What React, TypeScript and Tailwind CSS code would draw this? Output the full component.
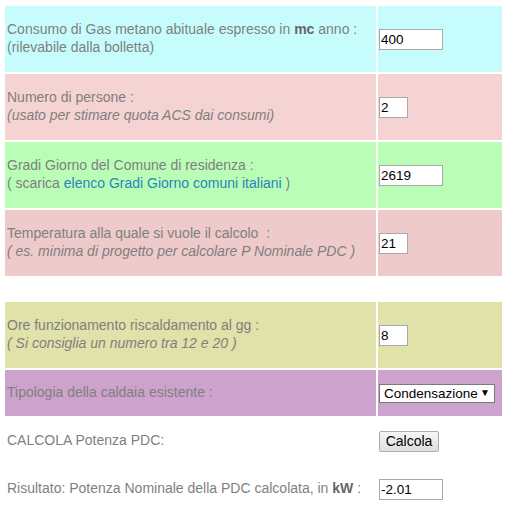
import React from 'react';

const font = "font-['Liberation_Sans',Arial,sans-serif]";

const rows = [
  {
    bg: 'bg-[#c6fdfc]',
    label: (
      <>
        Consumo di Gas metano abituale espresso in <b className="text-[#666]">mc</b> anno :
        <br />
        (rilevabile dalla bolletta)
      </>
    ),
    value: '400',
    wide: true,
  },
  {
    bg: 'bg-[#f5d3d2]',
    label: (
      <>
        Numero di persone :
        <br />
        <i>(usato per stimare quota ACS dai consumi)</i>
      </>
    ),
    value: '2',
    wide: false,
  },
  {
    bg: 'bg-[#b9fdb7]',
    label: (
      <>
        Gradi Giorno del Comune di residenza :
        <br />( scarica <a className="text-[#2a86b8]">elenco Gradi Giorno comuni italiani</a> )
      </>
    ),
    value: '2619',
    wide: true,
  },
  {
    bg: 'bg-[#eecaca]',
    label: (
      <>
        Temperatura alla quale si vuole il calcolo&nbsp; :
        <br />
        <i>( es. minima di progetto per calcolare P Nominale PDC )</i>
      </>
    ),
    value: '21',
    wide: false,
  },
];

function Field({ value, wide }: { value: string; wide: boolean }) {
  return (
    <input
      readOnly
      value={value}
      className={`${wide ? 'w-[64px]' : 'w-[29px]'} h-[21px] border border-[#a9a9a9] bg-white px-px text-[13.5px] text-black outline-none ${font}`}
    />
  );
}

export default function App() {
  return (
    <div className={`pt-[4px] pl-[3px] text-[14px] leading-[18px] text-[#7f7f7f] ${font}`}>
      <table className="border-separate border-spacing-[2px]">
        <tbody>
          {rows.map((r, i) => (
            <tr key={i} className={`h-[66px] ${r.bg}`}>
              <td className="w-[371px] pl-[2px] pt-px pb-[4px] align-middle">{r.label}</td>
              <td className="w-[124px] px-px align-middle">
                <Field value={r.value} wide={r.wide} />
              </td>
            </tr>
          ))}
          <tr className="h-[22px]">
            <td></td>
            <td></td>
          </tr>
          <tr className="h-[66px] bg-[#e1e1aa]">
            <td className="pl-[2px] pt-px pb-[4px] align-middle">
              Ore funzionamento riscaldamento al gg :
              <br />
              <i>( Si consiglia un numero tra 12 e 20 )</i>
            </td>
            <td className="px-px align-middle">
              <Field value="8" wide={false} />
            </td>
          </tr>
          <tr className="h-[46px] bg-[#cda3cd]">
            <td className="pl-[2px] pb-[2px] align-middle">Tipologia della caldaia esistente :</td>
            <td className="px-px align-middle">
              <div className="relative w-[116px]">
                <select
                  defaultValue="c"
                  className={`h-[19px] w-[116px] appearance-none border border-[#7a7a7a] bg-white pl-[4px] text-[13.5px] leading-[17px] text-black outline-none ${font}`}
                >
                  <option value="c">Condensazione</option>
                  <option value="t">Tradizionale</option>
                </select>
                <span className="pointer-events-none absolute right-[5px] top-[3px] text-[10px] leading-[12px] text-black">
                  ▼
                </span>
              </div>
            </td>
          </tr>
          <tr className="h-[46px]">
            <td className="pl-[2px] pb-[2px] align-middle">CALCOLA Potenza PDC:</td>
            <td className="px-px align-middle">
              <button
                className={`h-[21px] w-[60px] rounded-[2px] border border-[#adadad] bg-gradient-to-b from-[#f6f6f6] to-[#dedede] text-[14px] leading-[18px] text-black ${font}`}
              >
                Calcola
              </button>
            </td>
          </tr>
          <tr className="h-[46px]">
            <td className="pl-[2px] pb-[2px] align-middle">
              Risultato: Potenza Nominale della PDC calcolata, in <b className="text-[#666]">kW</b> :
            </td>
            <td className="px-px align-middle">
              <Field value="-2.01" wide={true} />
            </td>
          </tr>
        </tbody>
      </table>
    </div>
  );
}
